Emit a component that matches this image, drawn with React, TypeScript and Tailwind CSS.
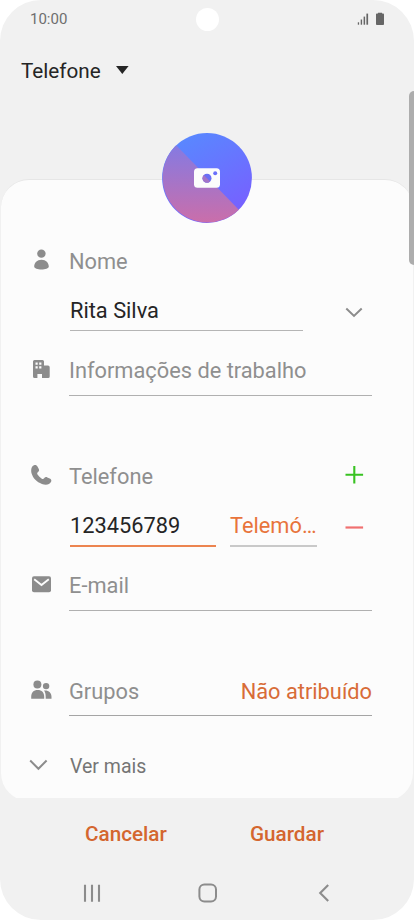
import type { ReactNode } from "react";
import { clsx } from "clsx";

interface RowProps {
  icon?: ReactNode;
  className?: string;
  children: ReactNode;
}

function Row({ icon, className, children }: RowProps) {
  return (
    <div className={clsx("flex items-start", className)}>
      <div className="ml-[27px] mr-[14px] h-[26px] w-[27px] shrink-0">{icon}</div>
      {children}
    </div>
  );
}

function RowIcon({ children }: { children: ReactNode }) {
  return (
    <svg width="27" height="26" viewBox="0 0 27 26" fill="#8c8c8c" aria-hidden>
      {children}
    </svg>
  );
}

function StatusBar() {
  return (
    <div className="flex h-[38px] items-center justify-between px-[30px]">
      <span className="w-[50px] text-[15px] leading-[20px] text-[#6e6e6e]">10:00</span>
      <div className="h-[23px] w-[23px] rounded-full bg-white" />
      <div className="flex w-[50px] items-center justify-end gap-[7px]">
        <svg width="12" height="14" viewBox="0 0 12 14" fill="#666">
          <rect x="0.8" y="10.3" width="1.3" height="2.4" />
          <rect x="3.7" y="7.5" width="1.4" height="5.2" />
          <rect x="6.6" y="4.6" width="1.5" height="8.1" />
          <rect x="9.4" y="1.6" width="1.7" height="11.1" />
        </svg>
        <svg width="8" height="14" viewBox="0 0 8 14" fill="#666">
          <path d="M2 1.6V.8h4v.8h1.2q.8 0 .8.8V12q0 1-.8 1H.8Q0 13 0 12V2.400q0-.8.8-.8Z" />
        </svg>
      </div>
    </div>
  );
}

function Avatar() {
  return (
    <svg
      className="absolute left-[160px] top-[-47px]"
      width="92"
      height="92"
      viewBox="161 132 92 92"
      aria-label="Adicionar foto"
    >
      <defs>
        <linearGradient id="blue" x1="0.25" y1="0" x2="0.85" y2="1">
          <stop offset="0" stopColor="#5889ff" />
          <stop offset="1" stopColor="#7a5cff" />
        </linearGradient>
        <linearGradient id="pink" x1="0" y1="0" x2="0" y2="1">
          <stop offset="0" stopColor="#857ae2" />
          <stop offset="1" stopColor="#ca6eaa" />
        </linearGradient>
      </defs>
      <circle cx="207" cy="178" r="44.9" fill="url(#blue)" />
      <path d="M176.200 145.300A44.900 44.900 0 1 0 238.800 209.700Z" fill="url(#pink)" />
      <rect x="194" y="168.300" width="26" height="19.400" rx="3.500" fill="#fcfcfc" />
      <circle cx="207" cy="178.300" r="4.500" fill="#6a6ff5" />
      <path d="M203.800 175.100A4.500 4.500 0 0 0 210.200 181.500Z" fill="#a373c8" />
      <circle cx="215.200" cy="173.200" r="2" fill="#6a70fb" />
    </svg>
  );
}

function NavBar() {
  return (
    <nav className="flex h-[52px] items-center justify-between pl-[82px] pr-[80px]">
      <svg width="20" height="20" viewBox="0 0 20 20" stroke="#8c8c8c" strokeWidth="2.1">
        <path d="M3 1.700v17M10 1.700v17M17 1.700v17" />
      </svg>
      <svg width="20" height="20" viewBox="0 0 20 20" fill="none" stroke="#8c8c8c" strokeWidth="2">
        <rect x="1.400" y="1.500" width="16.600" height="17" rx="5" />
      </svg>
      <svg width="20" height="20" viewBox="0 0 20 20" fill="none" stroke="#8c8c8c" strokeWidth="2.1">
        <path d="M14.200 1.900L6.200 10l8 8.100" />
      </svg>
    </nav>
  );
}

export default function App() {
  return (
    <div className="bg-white">
      <div className="relative flex h-[920px] w-[414px] flex-col overflow-hidden rounded-[41px] bg-[#f1f1f1] font-['Roboto',sans-serif]">
        <StatusBar />

        {/* Storage selector */}
        <div className="flex h-[66px] items-center gap-[15px] pl-[21px]">
          <span className="text-[20.7px] leading-[26px] text-[#252525]">Telefone</span>
          <svg width="13" height="8" viewBox="0 0 13 8" fill="#252525" className="mt-[-2px]">
            <path d="M0 0h12.600L6.300 8Z" />
          </svg>
        </div>

        {/* Form */}
        <main className="mt-[75px] h-[619px] shrink-0 px-px text-[21.8px] leading-[28px] text-[#8f8f8f]">
          <div className="relative h-full">
            <div className="h-full overflow-hidden">
              <div className="h-[622px] rounded-[28px] border-t border-[#e6e6e6] bg-[#fcfcfc] pt-[68px]">
                <Row
                  icon={
                    <RowIcon>
                      <circle cx="13.4" cy="5.6" r="4.2" />
                      <path d="M6.200 18.400C6.200 14.800 9 11.700 13.500 11.700s7.300 3.100 7.300 6.700c0 1.800-3.600 3.100-7.300 3.100s-7.300-1.300-7.300-3.100Z" />
                    </RowIcon>
                  }
                >
                  <label className="h-[26px]">Nome</label>
                </Row>

                <Row className="mt-[23px]">
                  <div className="ml-px h-[34px] w-[233px] border-b border-[#b5b5b5] text-[#252525]">
                    Rita Silva
                  </div>
                  <svg className="ml-[42px] mt-[10px]" width="18" height="12" viewBox="0 0 18 12" fill="none" stroke="#8c8c8c" strokeWidth="2">
                    <path d="M1.300 1.500L9 8.900l7.700-7.400" />
                  </svg>
                </Row>

                <Row
                  className="mt-[26px]"
                  icon={
                    <RowIcon>
                      <path
                        fillRule="evenodd"
                        d="M6.500 3h8q1.500 0 1.500 1.500v4h4q1.700 0 1.700 1.700V19.500q0 1.500-1.500 1.500H14v-4H9.400v4H6.500Q5 21 5 19.500V4.500Q5 3 6.500 3ZM7.500 5.600v2.200h2.200V5.600Zm3.700 0v2.200h2.200V5.600ZM7.500 9.200v2.200h2.200V9.200Zm3.700 0v2.200h2.200V9.200Z"
                      />
                    </RowIcon>
                  }
                >
                  <div className="h-[39px] w-[303px] border-b border-[#b0b0b0]">Informações de trabalho</div>
                </Row>

                <Row
                  className="mt-[67px]"
                  icon={
                    <RowIcon>
                      <path d="M6 2.200C7.600 1.600 8.800 2.300 9.600 3.700l1.200 2.300c.6 1.300.2 2.300-1 3.200-.8.6-.8 1.400-.1 2.500 1 1.500 2.300 2.800 3.800 3.700 1.100.7 1.900.7 2.600-.1.900-1.100 1.900-1.500 3.200-.9l2.400 1.100c1.500.7 2.100 1.900 1.400 3.300-1.500 3-5.200 3.700-9.200 2.200C8.800 19 5 15.200 3.700 10.800 2.700 7.200 3.200 3.300 6 2.200Z" />
                    </RowIcon>
                  }
                >
                  <label className="h-[26px] w-[276px]">Telefone</label>
                  <svg className="mt-[3px]" width="19" height="18" viewBox="0 0 19 18" stroke="#38c222" strokeWidth="2.1">
                    <path d="M.5 8.700h17.600M9.300 0v17.400" />
                  </svg>
                </Row>

                <Row className="mt-[23px]">
                  <div className="ml-px h-[35px] w-[146px] border-b-2 border-[#ec8450] text-[#252525]">
                    123456789
                  </div>
                  <div className="ml-[14px] h-[35px] w-[87px] border-b-2 border-[#c9c9c9] text-[#e8743b]">
                    Telemó…
                  </div>
                  <svg className="ml-[28px] mt-[14px]" width="19" height="3" viewBox="0 0 19 3" stroke="#f07070" strokeWidth="2.2">
                    <path d="M.5 1.500h17.600" />
                  </svg>
                </Row>

                <Row
                  className="mt-[25px]"
                  icon={
                    <RowIcon>
                      <rect x="4" y="4.2" width="19" height="16" rx="2" />
                      <path d="M6.200 7.300L13.500 13l7.300-5.700" fill="none" stroke="#fcfcfc" strokeWidth="1.9" />
                    </RowIcon>
                  }
                >
                  <div className="h-[39px] w-[303px] border-b border-[#b0b0b0]">E-mail</div>
                </Row>

                <Row
                  className="mt-[67px]"
                  icon={
                    <RowIcon>
                      <circle cx="9.4" cy="6.5" r="4" />
                      <path d="M3.200 20.800v-1.800c0-4.300 2.400-6.900 6.500-6.900s6.500 2.600 6.500 6.900v1.800Z" />
                      <circle cx="18.1" cy="8.1" r="3.2" />
                      <path d="M16 12.500c4.600-.5 7.500 2.100 7.500 6.300v2h-5.800v-1.900c0-2.800-.5-4.800-1.700-6.400Z" />
                    </RowIcon>
                  }
                >
                  <div className="flex h-[38px] w-[303px] justify-between border-b border-[#a5a5a5]">
                    <span>Grupos</span>
                    <span className="text-[#d86c38]">Não atribuído</span>
                  </div>
                </Row>

                <Row
                  className="mt-[37px]"
                  icon={
                    <svg width="27" height="26" viewBox="0 0 27 26" fill="none" stroke="#8c8c8c" strokeWidth="2">
                      <path d="M2.200 7.500l8.200 8.300 8.200-8.300" />
                    </svg>
                  }
                >
                  <span className="ml-px text-[19.5px] text-[#757575]">Ver mais</span>
                </Row>
              </div>
            </div>
            <Avatar />
          </div>
        </main>

        {/* Actions */}
        <div className="flex h-[69px] shrink-0 text-[20.7px] font-medium leading-[26px] text-[#d4662f]">
          <button className="ml-[85px] mt-[23px] h-[26px] w-[165px] text-left">Cancelar</button>
          <button className="mt-[23px] h-[26px] text-left">Guardar</button>
        </div>
        <NavBar />

        {/* Scroll thumb */}
        <div className="absolute right-[-6px] top-[91px] h-[174px] w-[11px] rounded-[5px] bg-[#adadad]" />
      </div>
    </div>
  );
}
